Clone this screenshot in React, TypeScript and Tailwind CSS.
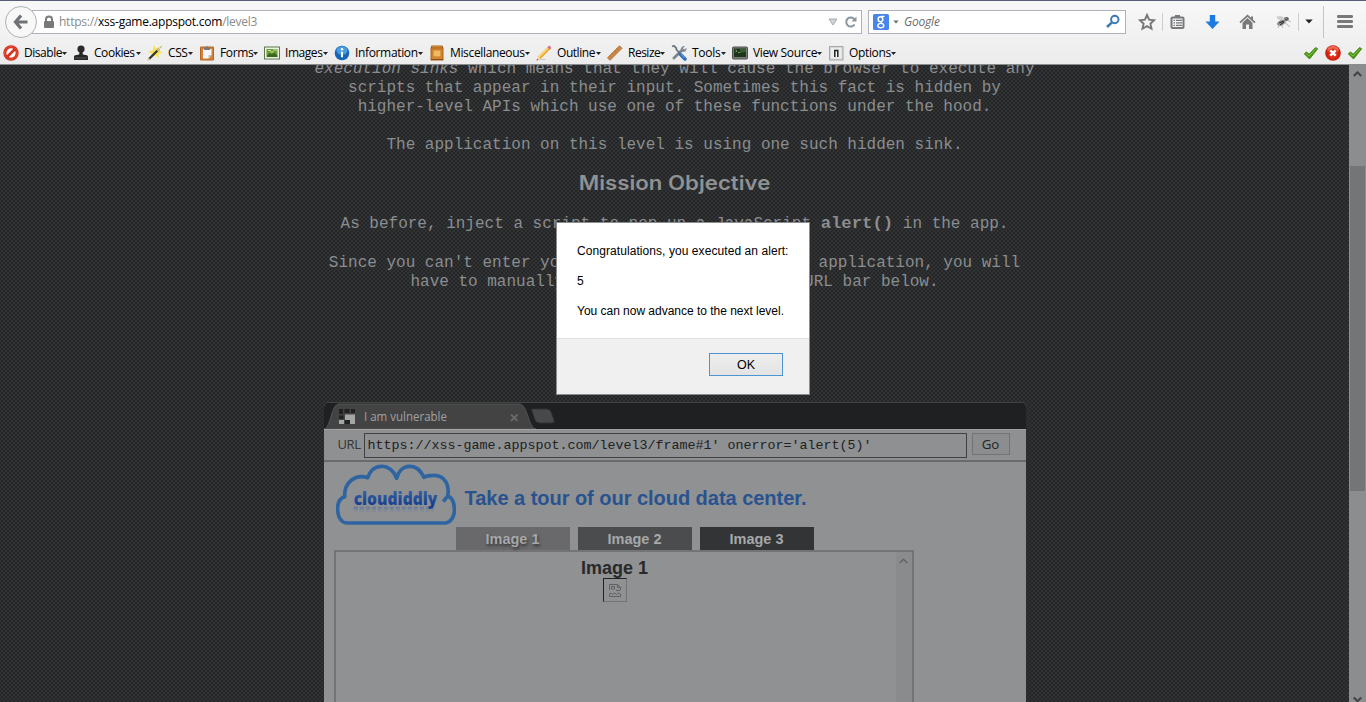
import React from "react";

type IconName =
  | "disable" | "cookies" | "css" | "forms" | "images" | "info"
  | "misc" | "outline" | "resize" | "tools" | "source" | "options";

const menu: { icon: IconName; label: string; item: string; text: string }[] = [
  { icon: "disable", label: "Disable", item: "w-[70px]", text: "w-[38px] tracking-[-0.45px]" },
  { icon: "cookies", label: "Cookies", item: "w-[74px]", text: "w-[42px] tracking-[-0.45px]" },
  { icon: "css", label: "CSS", item: "w-[52px]", text: "w-[20px] tracking-[-0.4px]" },
  { icon: "forms", label: "Forms", item: "w-[65px]", text: "w-[33px] tracking-[-0.35px]" },
  { icon: "images", label: "Images", item: "w-[70px]", text: "w-[38px] tracking-[-0.45px]" },
  { icon: "info", label: "Information", item: "w-[95px]", text: "w-[63px] tracking-[-0.35px]" },
  { icon: "misc", label: "Miscellaneous", item: "w-[107px]", text: "w-[75px] tracking-[-0.35px]" },
  { icon: "outline", label: "Outline", item: "w-[71px]", text: "w-[39px] tracking-[-0.45px]" },
  { icon: "resize", label: "Resize", item: "w-[64px]", text: "w-[32px] tracking-[-0.5px]" },
  { icon: "tools", label: "Tools", item: "w-[61px]", text: "w-[29px] tracking-[-0.25px]" },
  { icon: "source", label: "View Source", item: "w-[96px]", text: "w-[64px] tracking-[-0.35px]" },
  { icon: "options", label: "Options", item: "w-[70px]", text: "w-[42px] tracking-[-0.35px]" },
];

const art: Record<IconName, React.ReactNode> = {
  disable: (
    <>
      <circle cx="8" cy="8" r="7.7" fill="#cf2a17" />
      <circle cx="8" cy="8" r="6.3" fill="none" stroke="#ee5a40" strokeWidth="1" />
      <circle cx="8" cy="8" r="4.7" fill="#fff" />
      <path d="M4 12 12 4" stroke="#d8331f" strokeWidth="2.6" />
    </>
  ),
  cookies: (
    <>
      <circle cx="8" cy="4" r="3.6" fill="#2a2a2a" />
      <path d="M6.5 6h3l.3 3.5 4 .8c.9.3 1.2 1 1.2 2V15H1v-2.700c0-1 .3-1.700 1.200-2l4-.8z" fill="#262626" />
      <path d="M2 13h12" stroke="#666" strokeWidth=".8" />
    </>
  ),
  css: (
    <>
      <path d="m7 0 2 3.500L14 1l-1.500 4.500 3 2.500-4 1 .5 4-3.500-2.500L4 13l.5-4.500L1 6.500l4.500-1z" fill="#f6e35a" />
      <path d="M1.500 14.500 12 4" stroke="#2f2f2f" strokeWidth="2.200" />
      <path d="m10.300 5.700 2-2M1 15l1.500-1.500" stroke="#d5c98c" strokeWidth="2" />
      <path d="m13 3 2-2" stroke="#aaa" strokeWidth="1" />
    </>
  ),
  forms: (
    <>
      <rect x="1" y="1.500" width="14" height="14" rx="1" fill="#b9651f" />
      <rect x="2" y="2.500" width="12" height="12" fill="#d58239" />
      <path d="M4 4h8.500v6l-3 3.500H4z" fill="#f7f8fc" />
      <path d="M12.500 10h-3v3.500z" fill="#bcc2cc" />
      <path d="M5 5V2.500h2L8 .6l1 1.900h2V5z" fill="#7a7a80" />
    </>
  ),
  images: (
    <>
      <rect x=".5" y="2" width="15" height="12" fill="#edf1e5" stroke="#60794c" />
      <rect x="2.500" y="4" width="11" height="8" fill="#6a9c3c" />
      <path d="M3 10.500 6 8l2 1.500 2-2 3.300 3V12H3z" fill="#37661f" />
      <path d="M4 5.500h3M9 5h4M6.500 7h3" stroke="#cfe88c" />
    </>
  ),
  info: (
    <>
      <circle cx="8" cy="8" r="7.300" fill="#1765b5" />
      <ellipse cx="8" cy="5.500" rx="5.500" ry="4.200" fill="#4b9be0" />
      <circle cx="8" cy="4.200" r="1.200" fill="#fff" />
      <path d="M7 6.700h2v5.500H7z" fill="#fff" />
    </>
  ),
  misc: (
    <>
      <path d="M2.500 1h11v2h-11z" fill="#e9ab58" stroke="#a9601a" />
      <rect x="2" y="3" width="12" height="12" fill="#d98a2d" stroke="#a9601a" />
      <rect x="4" y="5" width="8" height="7" fill="#f0b964" stroke="#c47a26" />
      <path d="M2 14.500h12" stroke="#8b4b12" />
    </>
  ),
  outline: (
    <>
      <path d="M3.500 14.500h6" stroke="#c9c9c9" />
      <path d="m.8 15.300 1.500-4L12.300 1.500l2.200 2.200L4.700 13.800z" fill="#f2a623" />
      <path d="M2.700 12.300 12.800 2.300" stroke="#fde08b" strokeWidth="1.200" />
      <path d="m11.400 2.200 1-1.100c1.200-1 3.600 1.300 2.600 2.500l-1.100 1.200z" fill="#cf7b8d" />
      <path d="m2.200 11.300 2.500 2.500-3.900 1.500z" fill="#efd7b0" />
      <path d="m.5 15.600.6-1.900 1.300 1.300z" fill="#c0392b" />
    </>
  ),
  resize: (
    <>
      <path d="M.5 12.800 12.500.8l2.500 2.500L3 15.300z" fill="#cf8a45" stroke="#a7642c" strokeWidth=".8" />
      <path d="m3 10.500 1 1M5.300 8.200l1 1M7.600 5.900l1 1M9.900 3.600l1 1" stroke="#8c5221" strokeWidth=".7" />
    </>
  ),
  tools: (
    <>
      <path d="m2 14 8.500-8.500" stroke="#79828a" strokeWidth="2.600" />
      <path d="M10 6.500C8.700 3.500 11 .6 14 1l-2 2.200 1.200 1.300L15.500 3c.5 3-2.300 5.200-5.500 3.500z" fill="#838b92" />
      <path d="M1 1.500 3 .8l2.300 2.400.1 1.500L9 8.500" fill="none" stroke="#67727b" strokeWidth="1.700" />
      <path d="m9.500 9.500 4.500 4.500" stroke="#2c69bd" strokeWidth="3.400" strokeLinecap="round" />
      <path d="m9.500 8.800 4.500 4.500" stroke="#72a4e4" strokeWidth="1" />
      <path d="m1.500 14.500 1-1" stroke="#eee" />
    </>
  ),
  source: (
    <>
      <rect x=".5" y="2" width="15" height="12" rx="1" fill="#7c7e7c" stroke="#505250" />
      <rect x="2" y="3.500" width="12" height="8.500" fill="#1d3519" />
      <path d="m3.500 5 1.500 1-1.500 1M6 7.500h2" stroke="#9db78f" fill="none" strokeWidth=".8" />
      <path d="M8 4h6v3L8 8z" fill="#385b2f" />
    </>
  ),
  options: (
    <>
      <rect x="1.500" y="1.500" width="13.500" height="13.500" fill="#d5d6d8" stroke="#a4a7ab" />
      <rect x="3" y="3" width="10.500" height="10.500" fill="#eceded" />
      <path d="M6.800 12V5.500h3V12" fill="none" stroke="#222" strokeWidth="1.500" />
      <path d="M8 7h1v5H8z" fill="#fff" />
    </>
  ),
};

function Check() {
  return (
    <svg width="16" height="16" viewBox="0 0 16 16">
      <path d="M1.300 8.800 3.500 7l2.700 2.200L12.600 2.500l2.100 1.300L6.500 14z" fill="#4d9b10" stroke="#2f7608" strokeWidth=".8" />
      <path d="m3.200 8.500 3 2.500 7-7.500" fill="none" stroke="#8bc84b" strokeWidth=".8" />
    </svg>
  );
}

function NavBar() {
  return (
    <div className="flex h-[41px] items-center">
      <div className="relative z-10 ml-[5px] flex h-8 w-8 shrink-0 items-center justify-center rounded-full border border-[#aeb2b8] bg-[#f8f8f8]">
        <svg width="16" height="16" viewBox="0 0 16 16">
          <path d="M8 1.500 2.500 8l5.500 6.500M2.500 8H14.500" fill="none" stroke="#707276" strokeWidth="3.200" />
        </svg>
      </div>
      <div className="-ml-[5px] flex h-6 w-[830px] items-center border border-[#b0b2bb] bg-white">
        <svg className="ml-[10px]" width="12" height="14" viewBox="0 0 12 14">
          <path d="M3 7V4.500a3 3 0 0 1 6 0V7" fill="none" stroke="#797979" strokeWidth="2" />
          <rect x="1" y="6" width="10" height="7" rx="1" fill="#797979" />
        </svg>
        <div className="ml-1 w-[769px] whitespace-nowrap text-[12px] leading-[22px] tracking-[-0.24px] text-[#8a8a8a]">
          https://<span className="text-black">xss-game.appspot.com</span>/level3
        </div>
        <svg width="10" height="8" viewBox="0 0 10 8">
          <path d="M1 1h8L5 7z" fill="#d2d5d8" stroke="#a6abb0" />
        </svg>
        <svg className="ml-[6px]" width="14" height="14" viewBox="0 0 14 14">
          <path d="M10.500 9.500a4.500 4.500 0 1 1 0-5" fill="none" stroke="#8b959e" strokeWidth="2" />
          <path d="M12.500 1.500v5H7.500z" fill="#8b959e" />
        </svg>
      </div>
      <div className="ml-[6px] flex h-6 w-[258px] items-center border border-[#b0b2bb] bg-white">
        <svg className="ml-1" width="16" height="16" viewBox="0 0 16 16">
          <rect width="16" height="16" rx="1.500" fill="#4785ee" />
          <ellipse cx="7.500" cy="5.200" rx="2.300" ry="2.500" fill="none" stroke="#fff" strokeWidth="1.500" />
          <path d="M8 2.300h3.500M8.500 7.700 8 9.200" fill="none" stroke="#fff" strokeWidth="1.200" />
          <ellipse cx="7.800" cy="11.600" rx="3" ry="2.200" fill="none" stroke="#fff" strokeWidth="1.400" />
        </svg>
        <svg className="ml-1" width="6" height="4" viewBox="0 0 6 4"><path d="M.5.5h5L3 3.500z" fill="#666" /></svg>
        <div className="ml-[5px] w-[201px] text-[12px] italic leading-[22px] tracking-[-0.2px] text-[#6b6b6b]">Google</div>
        <svg width="16" height="16" viewBox="0 0 16 16">
          <circle cx="9.800" cy="5.500" r="3.700" fill="none" stroke="#3b79b5" strokeWidth="2" />
          <path d="m7 8.300-5 4.700" stroke="#3b79b5" strokeWidth="2.500" />
        </svg>
      </div>
      <svg className="ml-3" width="18" height="18" viewBox="0 0 18 18">
        <path d="m9 2 2.100 4.700 5.100.5-3.800 3.500 1.100 5L9 13.100l-4.500 2.600 1.100-5-3.800-3.500 5.100-.5z" fill="none" stroke="#77797b" strokeWidth="1.900" />
      </svg>
      <div className="ml-[6px] h-[18px] w-px bg-[#cccdd0]" />
      <svg className="ml-[7px]" width="15" height="16" viewBox="0 0 15 16">
        <path d="M5 4V1h5v3" fill="#77797b" />
        <rect x="1.500" y="3.500" width="12" height="10.500" rx="1" fill="#f4f4f4" stroke="#77797b" strokeWidth="2" />
        <path d="M3.500 6.300h1.500m1 0h6M3.500 8.800h1.500m1 0h6M3.500 11.300h1.500m1 0h6" stroke="#77797b" strokeWidth="1.300" />
      </svg>
      <svg className="ml-5" width="15" height="16" viewBox="0 0 15 16">
        <path d="M4.800 1h5.400v6.500h4.300l-7 7.500-7-7.500h4.300z" fill="#1b7be3" />
      </svg>
      <svg className="ml-[19px]" width="17" height="16" viewBox="0 0 17 16">
        <path d="M1 8.700 8.500 1.600 16 8.700" fill="none" stroke="#77797b" strokeWidth="1.700" />
        <path d="m3.500 8.700 5-4.800 5 4.800V15H10v-4.500H7V15H3.500zM12 2.500h2v4l-2-2z" fill="#77797b" />
      </svg>
      <svg className="ml-[19px]" width="17" height="16" viewBox="0 0 17 16">
        <path d="M1 3.500h6L9 7 5 6.500zM3 12l5-5 4 1-5 4z" fill="#d0d0d0" />
        <ellipse cx="6.500" cy="8.500" rx="4.500" ry="2.400" transform="rotate(-25 7 9)" fill="#888" />
        <ellipse cx="11.500" cy="5" rx="2.300" ry="2" fill="#555" />
        <path d="M2 3h5l3 4M8 7l7 6M5 9l-2 5M12 6l4 2M9 3l3 2M6 10l2 4" stroke="#aaa" strokeWidth=".8" fill="none" />
        <path d="m4 9 5-2M5 11l4-3" stroke="#222" strokeWidth=".9" />
      </svg>
      <div className="ml-[6px] h-[18px] w-px bg-[#cccdd0]" />
      <svg className="ml-[6px]" width="8" height="5" viewBox="0 0 8 5"><path d="M.3.500h7.400L4 4.500z" fill="#222" /></svg>
      <div className="ml-[10px] h-8 w-px bg-[#c4c5c8]" />
      <svg className="ml-[13px]" width="16" height="14" viewBox="0 0 16 14">
        <path d="M1.200 1.500h13.600M1.200 6.500h13.600M1.200 11.500h13.600" stroke="#77797b" strokeWidth="2.800" strokeLinecap="round" />
      </svg>
    </div>
  );
}

function DevBar() {
  return (
    <div className="flex h-[22px] items-center pl-[3px]">
      {menu.map((m) => (
        <div key={m.label} className={"flex shrink-0 items-center " + m.item}>
          <svg className="shrink-0" width="16" height="16" viewBox="0 0 16 16">{art[m.icon]}</svg>
          <span className={"ml-[5px] whitespace-nowrap text-[12px] leading-[18px] text-black " + m.text}>{m.label}</span>
          <svg className="shrink-0" width="5" height="3" viewBox="0 0 5 3"><path d="M0 0h5L2.500 3z" fill="#222" /></svg>
        </div>
      ))}
      <div className="ml-auto flex items-center pr-[3px]">
        <Check />
        <svg className="ml-[6px]" width="16" height="16" viewBox="0 0 16 16">
          <circle cx="8" cy="8" r="7.800" fill="#c81f10" />
          <ellipse cx="8" cy="5" rx="5.800" ry="4" fill="#ec6a55" />
          <circle cx="8" cy="9" r="5.500" fill="#dc2b17" />
          <path d="m5.300 5.300 5.400 5.400m0-5.400-5.400 5.400" stroke="#fff" strokeWidth="2.600" />
        </svg>
        <div className="ml-[6px] h-4"><Check /></div>
      </div>
    </div>
  );
}

function GameFrame() {
  return (
    <div className="mx-auto h-[300px] w-[702px] shrink-0 overflow-hidden rounded-t-[5px] bg-[#8f9193]">
      <div className="flex h-[27px] bg-[#1f2022] shadow-[inset_0_1px_0_#414345]">
        <svg width="240" height="27" viewBox="0 0 240 27">
          <path d="M0 27C7 26 7 2 15 2h180c9 0 9 24 17 25z" fill="#424342" stroke="#555655" strokeWidth="1" />
          <path d="M208 9q-2-2 1-2h14q3 0 4 3l3 8q1 3-2 3h-12q-4 0-5-3z" fill="#48494b" stroke="#2f3032" />
          <path d="M15 7h4v5h-4zM20.500 7h5v4h-5zM27 7h4v4h-4zM15 13.500h4.500V17H15z" fill="#202123" />
          <path d="M21 12.500h10V22h-5v-4h-5zM15 18h5v4h-5z" fill="#a5a7a7" />
          <path d="M21 18h5v4h-5z" fill="#202123" />
          <text x="40" y="19" fill="#a0a1a2" fontSize="12.500" fontFamily="'Open Sans'" textLength="83" lengthAdjust="spacingAndGlyphs">I am vulnerable</text>
          <path d="m187 12.500 6.500 6.500m0-6.500-6.500 6.500" stroke="#68696b" strokeWidth="1.800" />
        </svg>
      </div>
      <div className="flex h-[33px] items-center border-b-2 border-[#696a6c] bg-[#8e9092] pt-px shadow-[inset_0_1px_0_#a1a2a3]">
        <div className="w-10 pl-[14px] text-[13px] tracking-[-0.4px] text-[#333435]">URL</div>
        <div className="h-[25px] w-[603px] whitespace-pre border border-[#404143] pl-[3px] text-[13.330px] leading-[24px] text-[#202123] [font-family:'Liberation_Mono',monospace]">https://xss-game.appspot.com/level3/frame#1' onerror='alert(5)'</div>
        <div className="-mt-[3px] ml-[5px] h-[22px] w-[38px] border border-[#727375] bg-[#8b8d8f] text-center text-[13.300px] leading-[20px] text-[#222324]">Go</div>
      </div>
      <div className="flex h-[65px] [font-family:'Liberation_Sans',sans-serif]">
        <svg className="ml-3 mt-[2px]" width="120" height="62" viewBox="60 207 360 186">
          <defs>
            <linearGradient id="cloudText" x1="0" y1="0" x2="0" y2="1">
              <stop offset="0.25" stopColor="#355fa0" />
              <stop offset="0.8" stopColor="#153f90" />
            </linearGradient>
          </defs>
          <path d="M95 384H385C405 384 417 363 415 340 414 318 407 307 395 303 402 270 386 240 352 241 340 241 330 243 324 247 312 222 295 213 280 214 260 215 246 230 242 250 235 228 215 212 195 214 173 215 160 232 155 248 118 236 84 262 86 305 70 310 64 325 65 345 66 370 78 384 95 384ZM395 303 382 320" fill="none" stroke="#2f64a3" strokeWidth="11" strokeLinejoin="round" />
          <path d="M113 339H353" stroke="#5371a0" strokeWidth="9" strokeDasharray="13 5" opacity=".5" />
          <path d="M113 348H353" stroke="#68809f" strokeWidth="7" strokeDasharray="13 5" opacity=".25" />
          <text x="113" y="330" fontFamily="'Open Sans','Liberation Sans'" fontWeight="800" fontSize="55" fill="url(#cloudText)" textLength="251" lengthAdjust="spacingAndGlyphs">cloudiddly</text>
        </svg>
        <div className="ml-[9px] mt-[23px] whitespace-nowrap text-[20px] font-bold leading-[26px] tracking-[-0.03px] text-[#28538f]">Take a tour of our cloud data center.</div>
      </div>
      <div className="flex h-[23px] gap-[8px] pl-[132px] text-center text-[14.500px] font-bold leading-[24px] text-[#a6a8aa] [font-family:'Liberation_Sans',sans-serif]">
        <div className="w-[114px] bg-[#69696b] [text-shadow:1px_2px_3px_#333]">Image 1</div>
        <div className="w-[114px] bg-[#4b4c4e]">Image 2</div>
        <div className="w-[114px] bg-[#333436]">Image 3</div>
      </div>
      <div className="ml-[10px] flex h-[170px] w-[580px] border-2 border-[#737476]">
        <div className="flex flex-1 flex-col items-center pr-[2px] pt-[6px] [font-family:'Liberation_Sans',sans-serif]">
          <div className="text-[18px] font-bold leading-[20px] text-[#29292a]">Image 1</div>
          <div className="h-6 w-6 border border-b-[#727375] border-l-[#222] border-r-[#727375] border-t-[#222]">
            <svg width="22" height="22" viewBox="0 0 22 22">
              <path d="M5.500 11V5.500h8l3 3V11M13.500 5.500v3h3M5.500 15v2.500h11V15l-2-1-2 1.500-2-1.500-2 1.500-1.500-1.500zM7.500 7.500h3v2.500h-3zM12 11.500h4" fill="none" stroke="#5f6163" strokeWidth="1" />
            </svg>
          </div>
        </div>
        <div className="flex w-4 justify-center bg-[#8a8b8d] pt-[6px]">
          <svg width="9" height="6" viewBox="0 0 9 6"><path d="m.8 5 3.700-3.700L8.200 5" fill="none" stroke="#636466" strokeWidth="1.600" /></svg>
        </div>
      </div>
    </div>
  );
}

function AlertDialog() {
  return (
    <div className="absolute left-[556px] top-[157px] flex h-[173px] w-[254px] flex-col border border-[#8c8d8e] bg-white text-[12px] text-black [font-family:'Liberation_Sans',sans-serif]">
      <div className="flex h-[115px] flex-col gap-[15px] whitespace-nowrap pl-5 pt-[21px] leading-[15px]">
        <p className="tracking-[0.07px]">Congratulations, you executed an alert:</p>
        <p>5</p>
        <p className="tracking-[-0.02px]">You can now advance to the next level.</p>
      </div>
      <div className="flex flex-1 justify-end border-t border-[#dfdfdf] bg-[#f0f0f0] pr-[26px] pt-[14px]">
        <button className="h-[23px] w-[74px] border border-[#4a95d2] bg-linear-to-b from-[#eeeeee] to-[#e3e3e3] text-[12.500px] leading-[20px]">OK</button>
      </div>
    </div>
  );
}

export default function App() {
  return (
    <div className="flex h-[702px] w-[1366px] flex-col overflow-hidden bg-[#27292a] [font-family:'Open_Sans','Noto_Sans',sans-serif]">
      <header className="h-[65px] shrink-0 border-b border-[#8b8c8e] border-t border-t-[#5a5e78] bg-linear-to-b from-[#f8f8f8] to-[#ececec]">
        <NavBar />
        <DevBar />
      </header>
      <main className="relative flex h-[637px]">
        <div className="flex w-[1349px] flex-col overflow-hidden bg-[#242628] bg-[radial-gradient(#313335_0.7px,transparent_0.8px),radial-gradient(#313335_0.7px,transparent_0.8px)] bg-[length:4px_4px] [background-position:0_0,2px_2px]">
          <div className="-mt-[5px] flex h-[342px] shrink-0 flex-col text-center text-[16px] leading-[19px] text-[#8b8d8f] [font-family:'Liberation_Mono',monospace]">
            <p>
              <em>execution sinks</em> which means that they will cause the browser to execute any<br />
              scripts that appear in their input. Sometimes this fact is hidden by<br />
              higher-level APIs which use one of these functions under the hood.
            </p>
            <p className="mt-[19px]">The application on this level is using one such hidden sink.</p>
            <h2 className="mt-[16px] scale-x-[1.140] text-[19.500px] font-semibold leading-[24px] text-[#8f9193] [font-family:Inter,sans-serif]">Mission Objective</h2>
            <p className="mt-[19px]">
              As before, inject a script to pop up a JavaScript <b className="text-[17.300px] leading-[19px]">alert()</b> in the app.
            </p>
            <p className="mt-[20px]">
              Since you can't enter your payload anywhere in the application, you will<br />
              have to manually edit the address in the URL bar below.
            </p>
          </div>
          <GameFrame />
        </div>
        <div className="flex w-[17px] flex-col items-center bg-[#8c8d8f] pt-[6px]">
          <svg width="9" height="6" viewBox="0 0 9 6"><path d="m.8 5 3.700-3.700L8.200 5" fill="none" stroke="#414244" strokeWidth="2" /></svg>
          <div className="mt-[89px] h-[325px] w-[15px] bg-[#747577]" />
          <svg className="mt-auto" width="9" height="6" viewBox="0 0 9 6"><path d="m.8 1.500 3.700 3.700 3.700-3.700" fill="none" stroke="#414244" strokeWidth="2" /></svg>
        </div>
        <AlertDialog />
      </main>
    </div>
  );
}
